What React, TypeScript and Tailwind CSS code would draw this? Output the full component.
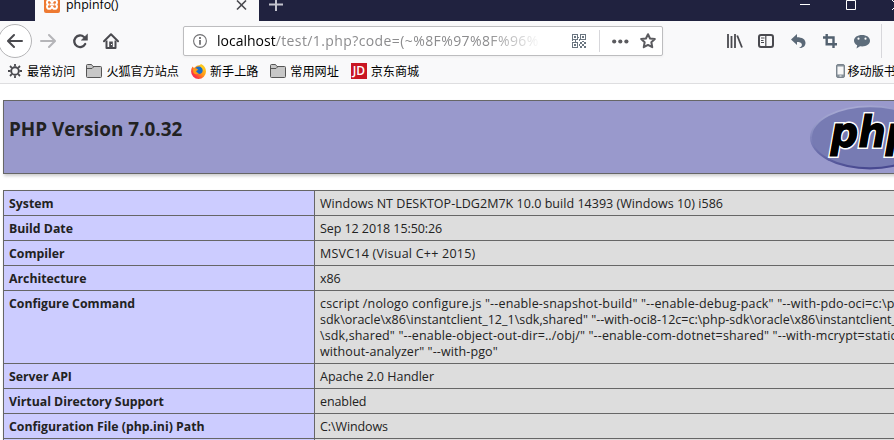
import React from "react";

const ink = "#4a4a4f";

function XamppIcon() {
  return (
    <svg className="block shrink-0" width="16" height="17" viewBox="0 0 16 17">
      <rect width="16" height="17" rx="2" fill="#ee7a32" />
      <path d="M4.2 4.2h2.3L8 6.600l1.500-2.400h2.300c1.600 1 1.600 3 .2 4.300 1.400 1.500 1.300 3.500-.2 4.300H9.500L8 10.600l-1.500 2.200H4.200c-1.600-.9-1.600-3-.2-4.300-1.400-1.300-1.300-3.300.2-4.300z" fill="none" stroke="#fff" strokeWidth="2" strokeLinejoin="round" />
      <path d="M5.500 8.500h5" stroke="#fff" strokeWidth="2" />
    </svg>
  );
}

function BackIcon() {
  return (
    <svg className="block" width="16" height="16" viewBox="0 0 16 16" fill="none" stroke={ink} strokeWidth="2" strokeLinecap="round" strokeLinejoin="round">
      <path d="M15 8H1.500M7 2 1 8l6 6" />
    </svg>
  );
}

function ForwardIcon() {
  return (
    <svg className="ml-2 block shrink-0" width="16" height="16" viewBox="0 0 16 16" fill="none" stroke="#b5b5b8" strokeWidth="2" strokeLinecap="round" strokeLinejoin="round">
      <path d="M1 8h13.500M9 2l6 6-6 6" />
    </svg>
  );
}

function ReloadIcon() {
  return (
    <svg className="ml-[16px] block shrink-0" width="16" height="16" viewBox="0 0 16 16">
      <path d="M12 4A5.800 5.800 0 1 0 13.200 11" fill="none" stroke={ink} strokeWidth="2.300" strokeLinecap="round" />
      <path d="M15.500 1v6.200H9.300z" fill={ink} stroke={ink} strokeWidth=".5" strokeLinejoin="round" />
    </svg>
  );
}

function HomeIcon() {
  return (
    <svg className="ml-[15px] block shrink-0" width="16" height="16" viewBox="0 0 16 16">
      <path d="M1 8.300 8 1.300l7 7" fill="none" stroke={ink} strokeWidth="2" strokeLinecap="round" strokeLinejoin="round" />
      <path d="M3.500 7.500V15h9V7.500" fill="none" stroke={ink} strokeWidth="2" strokeLinejoin="round" />
      <path d="M6.200 8.500h3.600V15H6.200z" fill={ink} />
      <path d="M8 11.500h1" stroke="#fff" />
    </svg>
  );
}

function InfoIcon() {
  return (
    <svg className="ml-[9px] block shrink-0" width="14" height="14" viewBox="0 0 14 14">
      <circle cx="7" cy="7" r="6.400" fill="none" stroke="#707073" strokeWidth="1.100" />
      <path d="M6.100 6h1.800v4.700H6.100zM6.100 3h1.800v1.900H6.100z" fill="#707073" />
    </svg>
  );
}

function QrIcon() {
  return (
    <svg className="block shrink-0" width="14" height="14" viewBox="0 0 14 14" fill="#6a7580" shapeRendering="crispEdges">
      <path fillRule="evenodd" d="M0 0h6v6H0zM1 1v4h4V1zM8 0h6v6H8zM9 1v4h4V1zM0 8h6v6H0zM1 9v4h4V9z" />
      <path d="M2 2h2v2H2zM10 2h2v2h-2zM2 10h2v2H2zM6 3h1v1H6zM7 5h1v2H7zM0 6h1v1H0zM3 6h1v2H3zM8 8h2v2H8zM10 7h2v1h-2zM12 8h2v2h-2zM10 10h2v2h-2zM7 10h1v2H7zM8 12h2v2H8zM12 12h2v2h-2z" />
    </svg>
  );
}

function StarIcon() {
  return (
    <svg className="ml-[11px] block shrink-0" width="16" height="16" viewBox="0 0 16 16" fill="none" stroke="#5b5b5f" strokeWidth="2" strokeLinejoin="round">
      <path d="m8 1.200 2.050 4.250 4.750.6-3.450 3.250.9 4.900L8 11.900l-4.250 2.300.9-4.900L1.200 6.050l4.750-.6z" />
    </svg>
  );
}

function LibraryIcon() {
  return (
    <svg className="ml-[64px] block shrink-0" width="16" height="16" viewBox="0 0 16 16" fill="none" stroke={ink} strokeWidth="1.800">
      <path d="M1 1v14M4.500 3v12M8 1v14M10.200 2.500 15 14.500" />
    </svg>
  );
}

function SidebarIcon() {
  return (
    <svg className="ml-[15px] block shrink-0" width="16" height="16" viewBox="0 0 16 16" fill="none" stroke={ink}>
      <rect x="1" y="2" width="14" height="12" rx="2" strokeWidth="2" />
      <path d="M7.800 2v12" strokeWidth="1.200" />
      <path d="M3 5h3.500M3 7.500h2.500M3 9.500h3" />
    </svg>
  );
}

function UndoIcon() {
  return (
    <svg className="ml-[17px] block shrink-0" width="15" height="16" viewBox="0 0 15 16">
      <path d="M6 1v3.200c5 0 8.700 2 8.500 6.100-.1 2.600-2.200 4.200-4.300 4.700H8c2.800-1.200 3.300-2.600 2.700-4C10.200 9.600 8.500 9 6 9v3L0 6.500z" fill="#5b6977" />
    </svg>
  );
}

function CropIcon() {
  return (
    <svg className="ml-[17px] block shrink-0" width="14" height="14" viewBox="0 0 14 14" fill="none" stroke="#53616f" strokeWidth="2.400">
      <path d="M3.700 0v10.200H14M0 3.500h10.500V14" />
    </svg>
  );
}

function ChatIcon() {
  return (
    <svg className="ml-[17px] block shrink-0" width="16" height="15" viewBox="0 0 16 15">
      <path d="M8 1c4.600 0 8 2.400 8 5.700s-3.400 5.700-8 5.700c-.7 0-1.300 0-2-.1L2.500 14.500l.7-3.300C1.200 10.200 0 8.600 0 6.700 0 3.400 3.400 1 8 1z" fill="#5e6d7b" />
      <circle cx="4.500" cy="4.700" r="1.100" fill="#fff" />
      <circle cx="11.500" cy="4.700" r="1.100" fill="#fff" />
    </svg>
  );
}

function GearIcon() {
  return (
    <svg className="block shrink-0" width="14" height="14" viewBox="0 0 14 14" fill="none" stroke={ink}>
      <circle cx="7" cy="7" r="3.800" strokeWidth="1.900" />
      <path d="M7 0v2.500M7 11.500V14M0 7h2.500M11.500 7H14M2 2l1.800 1.800M10.200 10.200 12 12M12 2l-1.800 1.800M3.800 10.200 2 12" strokeWidth="1.800" />
    </svg>
  );
}

function FolderIcon() {
  return (
    <svg className="block shrink-0" width="16" height="14" viewBox="0 0 16 14">
      <path d="M.5 12.500v-11q0-1 1-1h4l1.500 2h7.500q1 0 1 1v9q0 1-1 1h-13q-1 0-1-1z" fill="#c7c7c7" stroke="#555" />
      <path d="M1 4.500h5l1.500-1.500" fill="none" stroke="#555" />
    </svg>
  );
}

function FirefoxIcon() {
  return (
    <svg className="block shrink-0" width="15" height="15" viewBox="0 0 15 15">
      <defs>
        <linearGradient id="fire" x1="1" y1="0" x2="0" y2="1">
          <stop offset="0" stopColor="#ffe226" />
          <stop offset=".45" stopColor="#ff9a18" />
          <stop offset=".75" stopColor="#ff3b3b" />
          <stop offset="1" stopColor="#e31587" />
        </linearGradient>
      </defs>
      <path d="M1.500 2.500 3 4Q5.500 1 9 1l1-1q4.800 2 5 7.500a7.400 7.400 0 0 1-14.900 0Q.1 4.500 1.500 2.500z" fill="url(#fire)" />
      <circle cx="7.800" cy="6.300" r="3.800" fill="#176cc9" />
      <path d="M2 4.500q3-.8 5 .7-.5 1.500-2 1.800Q5.500 9 8 9.300 5 11.500 2.500 9z" fill="#ff9b17" />
      <path d="M9 .8q4 1.700 3.800 6.500Q12 4 9.800 3z" fill="#ffd11d" />
    </svg>
  );
}

function PhoneIcon() {
  return (
    <svg className="block shrink-0" width="9" height="14" viewBox="0 0 9 14">
      <rect x=".5" y=".5" width="8" height="13" rx="1.500" fill="#87919a" stroke="#7b858e" />
      <path d="M1.500 2.500h6v8h-6z" fill="#f7f7f7" />
      <path d="M3.500 12h2" stroke="#fff" />
    </svg>
  );
}

function PhpLogo() {
  return (
    <svg className="block shrink-0" width="120" height="66" viewBox="0 0 120 66">
      <defs>
        <linearGradient id="rim" x1="0" y1="0" x2=".35" y2="1">
          <stop offset="0" stopColor="#b6b8dc" />
          <stop offset=".5" stopColor="#7c80b8" />
          <stop offset="1" stopColor="#484990" />
        </linearGradient>
      </defs>
      <ellipse cx="60" cy="32.500" rx="60" ry="32" fill="url(#rim)" />
      <ellipse cx="60" cy="32.300" rx="58" ry="30" fill="#777bb3" />
      <g fontFamily="DejaVu Sans, sans-serif" fontWeight="700" fontStyle="italic" fontSize="42">
        <text x="20.500" y="42" textLength="83" lengthAdjust="spacingAndGlyphs" stroke="#fff" strokeWidth="4" strokeLinejoin="miter" paintOrder="stroke" fill="#000">php</text>
        <text x="20.500" y="42" textLength="83" lengthAdjust="spacingAndGlyphs" stroke="#000" strokeWidth="1" fill="#000">php</text>
      </g>
    </svg>
  );
}

function Bookmark({ icon, label, className }: { icon: React.ReactNode; label: string; className: string }) {
  return (
    <div className={`flex shrink-0 items-center ${className}`}>
      {icon}
      <span className="pt-[2px] whitespace-nowrap text-[12.1px] leading-4 text-black">{label}</span>
    </div>
  );
}

const rows = [
  { name: "System", lines: [{ text: "Windows NT DESKTOP-LDG2M7K 10.0 build 14393 (Windows 10) i586", track: "tracking-[0.03px]" }] },
  { name: "Build Date", lines: [{ text: "Sep 12 2018 15:50:26", track: "tracking-[-0.07px]" }] },
  { name: "Compiler", lines: [{ text: "MSVC14 (Visual C++ 2015)", track: "tracking-[0.23px]" }] },
  { name: "Architecture", lines: [{ text: "x86", track: "tracking-[-0.1px]" }] },
  {
    name: "Configure Command",
    lines: [
      { text: 'cscript /nologo configure.js "--enable-snapshot-build" "--enable-debug-pack" "--with-pdo-oci=c:\\php-', track: "tracking-[0.16px]" },
      { text: 'sdk\\oracle\\x86\\instantclient_12_1\\sdk,shared" "--with-oci8-12c=c:\\php-sdk\\oracle\\x86\\instantclient_12_1', track: "tracking-[0px]" },
      { text: '\\sdk,shared" "--enable-object-out-dir=../obj/" "--enable-com-dotnet=shared" "--with-mcrypt=static" "--', track: "tracking-[0.14px]" },
      { text: 'without-analyzer" "--with-pgo"', track: "tracking-[0.1px]" },
    ],
  },
  { name: "Server API", lines: [{ text: "Apache 2.0 Handler", track: "tracking-[0px]" }] },
  { name: "Virtual Directory Support", lines: [{ text: "enabled", track: "tracking-[-0.1px]" }] },
  { name: "Configuration File (php.ini) Path", lines: [{ text: "C:\\Windows", track: "tracking-[-0.1px]" }] },
];

export default function App() {
  return (
    <div className="flex h-[440px] w-[894px] flex-col overflow-hidden bg-white font-['Open_Sans','Noto_Sans_CJK_SC',sans-serif] text-[#222]">
      <div className="flex h-[21px] shrink-0 bg-[#20223f] pl-[35px]">
        <div className="flex w-[224px] shrink-0 bg-[#f9f9fa] pl-[9px]">
          <div className="-mt-1"><XamppIcon /></div>
          <span className="ml-[6px] -mt-[3px] text-[12.4px] leading-4 text-black">phpinfo()</span>
          <svg className="ml-auto mr-[12px] block" width="11" height="11" viewBox="0 0 11 11" stroke={ink} strokeWidth="1.600"><path d="m1 .5 9 9M10 .5l-9 9" /></svg>
        </div>
        <svg className="ml-[10px] block" width="14" height="12" viewBox="0 0 14 12" stroke="#c3c4ce" strokeWidth="2"><path d="M0 4.500h14M7 0v11" /></svg>
        <svg className="ml-auto block" width="94" height="11" viewBox="0 0 94 11" fill="none" stroke="#fff"><path d="M0 4.500h10M46.500.5h9v9h-9zM92 0l9 9M92 10l9-9" /></svg>
      </div>

      <div className="flex h-[40px] shrink-0 items-center bg-[#f9f9fa]">
        <div className="-ml-[2px] flex size-[34px] shrink-0 items-center justify-center rounded-full border border-[#b5b5b7] bg-white"><BackIcon /></div>
        <ForwardIcon />
        <ReloadIcon />
        <HomeIcon />
        <div className="ml-[64px] flex h-[30px] w-[480px] shrink-0 items-center rounded-[2px] border border-[#bdbdbf] bg-white shadow-[0_1px_3px_rgba(0,0,0,0.05)]">
          <InfoIcon />
          <div className="ml-[10px] w-[322px] shrink-0 overflow-hidden whitespace-nowrap text-[14px] leading-5 text-[#8c8c8e] [mask-image:linear-gradient(to_right,black_270px,transparent_325px)]">
            <span className="text-black">localhost</span><span className="tracking-[0.4px]">/test/1.php?code=(~%8F%97%8F%96%</span>
          </div>
          <div className="ml-[33px]"><QrIcon /></div>
          <div className="ml-[13px] h-[22px] w-px shrink-0 bg-[#d7d7db]" />
          <svg className="ml-[12px] block shrink-0" width="17" height="5" viewBox="0 0 17 5" fill="#5b5b5f"><circle cx="2.200" cy="2.500" r="2.100" /><circle cx="8.300" cy="2.500" r="2.100" /><circle cx="14.400" cy="2.500" r="2.100" /></svg>
          <StarIcon />
        </div>
        <LibraryIcon />
        <SidebarIcon />
        <UndoIcon />
        <CropIcon />
        <ChatIcon />
        <div className="ml-[11px] h-[34px] w-px shrink-0 bg-[#d7d7db]" />
      </div>

      <div className="flex h-[23px] shrink-0 items-center border-b border-[#dedee0] bg-[#f9f9fa] pb-[2px]">
        <Bookmark className="ml-2 gap-[5px]" icon={<GearIcon />} label="最常访问" />
        <Bookmark className="ml-[11px] gap-[4px]" icon={<FolderIcon />} label="火狐官方站点" />
        <Bookmark className="ml-3 gap-[4px]" icon={<FirefoxIcon />} label="新手上路" />
        <Bookmark className="ml-3 gap-[4px]" icon={<FolderIcon />} label="常用网址" />
        <Bookmark className="ml-3 gap-[4px]" icon={<div className="flex size-4 items-center justify-center bg-[#c91623] font-['Open_Sans'] text-[12px] font-semibold tracking-[-0.3px] text-white">JD</div>} label="京东商城" />
        <Bookmark className="ml-auto -mr-[14px] gap-[3px]" icon={<PhoneIcon />} label="移动版书签" />
      </div>

      <div className="mt-4 ml-[3px] flex h-[74px] w-[934px] shrink-0 justify-between border border-[#666] bg-[#9999cc] shadow-[1px_2px_3px_#ccc]">
        <h1 className="ml-[5px] mt-[14px] text-[18.9px] leading-7 font-bold">PHP Version 7.0.32</h1>
        <div className="mt-[4px] mr-[6px]"><PhpLogo /></div>
      </div>

      <div className="mt-4 ml-[3px] w-[934px] shrink-0 border-t border-l border-[#666] text-[12.5px] leading-[16px] shadow-[1px_2px_3px_#ccc]">
        {rows.map((row) => (
          <div key={row.name} className="flex border-b border-[#666]">
            <div className="w-[311px] shrink-0 border-r border-[#666] bg-[#ccccff] px-[5px] pt-[5px] pb-[3px] text-[12.3px] font-bold">{row.name}</div>
            <div className="grow bg-[#dddddd] px-[5px] pt-[5px] pb-[3px]">
              {row.lines.map((line) => <div key={line.text} className={`whitespace-nowrap ${line.track}`}>{line.text}</div>)}
            </div>
          </div>
        ))}
        <div className="flex h-6"><div className="w-[311px] border-r border-[#666] bg-[#ccccff]" /><div className="grow bg-[#dddddd]" /></div>
      </div>
    </div>
  );
}
